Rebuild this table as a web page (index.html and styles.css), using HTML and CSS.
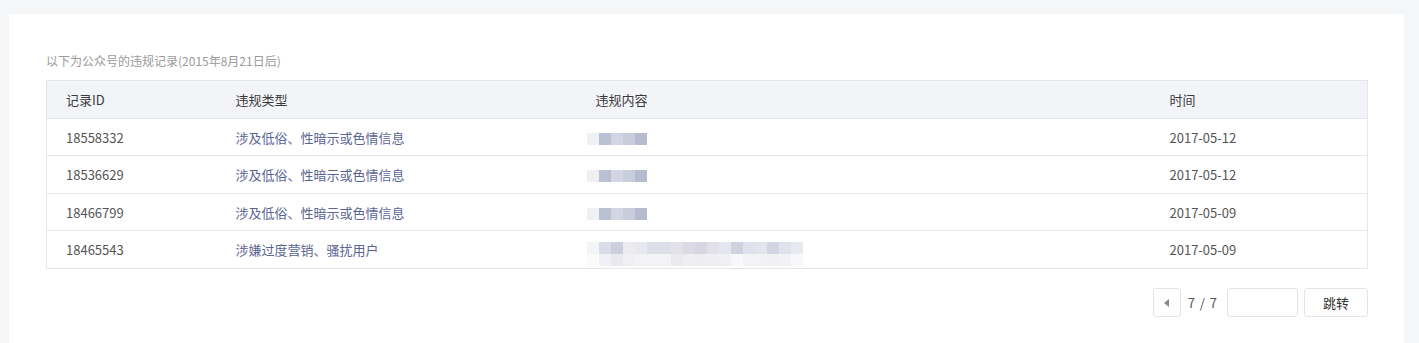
FILE: index.html
```html
<!DOCTYPE html>
<html lang="zh-CN">
<head>
<meta charset="utf-8">
<link rel="stylesheet" href="styles.css">
</head>
<body>
<div class="card">
  <p class="caption">以下为公众号的违规记录(2015年8月21日后)</p>
  <table class="records">
    <colgroup>
      <col class="c-id"><col class="c-type"><col class="c-content"><col class="c-time">
    </colgroup>
    <thead>
      <tr><th>记录ID</th><th>违规类型</th><th>违规内容</th><th>时间</th></tr>
    </thead>
    <tbody>
      <tr><td>18558332</td><td class="type">涉及低俗、性暗示或色情信息</td><td><div class="blur blur-short"></div></td><td>2017-05-12</td></tr>
      <tr><td>18536629</td><td class="type">涉及低俗、性暗示或色情信息</td><td><div class="blur blur-short"></div></td><td>2017-05-12</td></tr>
      <tr><td>18466799</td><td class="type">涉及低俗、性暗示或色情信息</td><td><div class="blur blur-short"></div></td><td>2017-05-09</td></tr>
      <tr><td>18465543</td><td class="type">涉嫌过度营销、骚扰用户</td><td><div class="blur blur-long"></div><div class="blur blur-long2"></div></td><td>2017-05-09</td></tr>
    </tbody>
  </table>
  <div class="pager">
    <button class="btn prev"><span class="tri"></span></button>
    <span class="count">7 / 7</span>
    <input class="jump-input" type="text">
    <button class="btn jump">跳转</button>
  </div>
</div>
</body>
</html>
```

FILE: styles.css
```css
html, body {
  margin: 0;
  padding: 0;
  background: #f5f6f8;
  font-family: "Noto Sans CJK SC", "Noto Sans", sans-serif;
}
body {
  padding: 14px 15px 0 9px;
  height: 343px;
  box-sizing: border-box;
  overflow: hidden;
}
.card {
  background: #fff;
  height: 329px;
  padding: 38px 36px 0 37px;
  box-sizing: border-box;
}
.caption {
  margin: 0 0 10px 0;
  font-size: 12px;
  line-height: 18px;
  color: #9a9a9a;
}
.records {
  width: 100%;
  table-layout: fixed;
  border-collapse: collapse;
  border: 1px solid #e4e6eb;
  font-size: 13px;
}
.c-id { width: 170px; }
.c-type { width: 360px; }
.c-content { width: 574px; }
th {
  background: #f3f4f7;
  font-weight: normal;
  color: #3a3a3a;
  text-align: left;
  height: 37px;
  padding: 0 0 0 19px;
  border-bottom: 1px solid #e4e6eb;
}
td {
  height: 37px;
  padding: 0 0 0 19px;
  color: #555;
  border-bottom: 1px solid #e6e7ea;
  vertical-align: middle;
}
tbody tr:nth-child(odd) td { height: 36px; }
td.type { color: #5b6594; }
.blur {
  margin-left: -9px;
  height: 12px;
}
.blur-short {
  width: 60px;
  margin-top: 3px;
  background: linear-gradient(to right,
    #f0f0f4 0 12px, #bac1d5 12px 24px, #d3d6e2 24px 36px, #c9cddb 36px 48px, #b5bcd1 48px 60px);
}
.blur-long {
  width: 216px;
  margin-top: 9px;
  background: linear-gradient(to right,
    #f4f4f7 0 12px, #dadde8 12px 24px, #ccd0dc 24px 36px, #ebebf0 36px 48px, #e8e8ee 48px 60px,
    #dcdfe8 60px 72px, #dcdfe8 72px 84px, #e2e2e9 84px 96px, #dadbe5 96px 108px, #d6d7e2 108px 120px,
    #e0e1e9 120px 132px, #e6e7ee 132px 144px, #cfd3e0 144px 156px, #dfe1ea 156px 168px, #e3e4ec 168px 180px,
    #d3d5e2 180px 192px, #e1e3eb 192px 204px, #e9eaf0 204px 216px);
}
.blur-long2 {
  width: 216px;
  background: linear-gradient(to right,
    #fafafb 0 12px, #f1f1f5 12px 24px, #e9e9ef 24px 36px, #f0f0f4 36px 48px, #f3f3f6 48px 60px,
    #f3f3f6 60px 72px, #f3f3f6 72px 84px, #e9e9ee 84px 96px, #efeff3 96px 108px, #ededf2 108px 120px,
    #efeff3 120px 132px, #f0f0f4 132px 144px, #f8f8fa 144px 156px, #f3f3f6 156px 168px, #f3f3f6 168px 180px,
    #f1f1f4 180px 192px, #f3f3f6 192px 204px, #f8f8fa 204px 216px);
}
.pager {
  display: flex;
  justify-content: flex-end;
  align-items: center;
  margin-top: 19px;
  height: 29px;
}
.btn {
  height: 29px;
  border: 1px solid #e3e4e8;
  border-radius: 3px;
  background: #fff;
  font-family: inherit;
  font-size: 13px;
  color: #333;
  padding: 0;
  box-sizing: border-box;
}
.prev {
  width: 28px;
  display: flex;
  align-items: center;
  justify-content: center;
}
.tri {
  width: 0;
  height: 0;
  border-top: 4px solid transparent;
  border-bottom: 4px solid transparent;
  border-right: 5px solid #888;
}
.count {
  font-size: 13px;
  color: #555;
  margin: 0 9px 0 7px;
  letter-spacing: 1px;
}
.jump-input {
  width: 71px;
  height: 29px;
  box-sizing: border-box;
  border: 1px solid #e3e4e8;
  border-radius: 3px;
  margin: 0 6px 0 0;
  padding: 0;
}
.jump {
  width: 64px;
}
```
